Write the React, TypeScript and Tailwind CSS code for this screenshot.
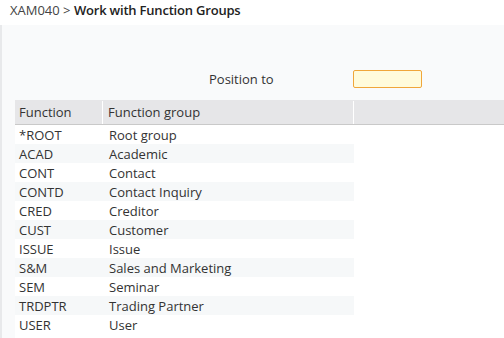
// Work with Function Groups
// Title bar, a "Position to" filter line and the list of function groups
// in a striped three-column table.

const ROWS: [string, string][] = [
  ["*ROOT", "Root group"],
  ["ACAD", "Academic"],
  ["CONT", "Contact"],
  ["CONTD", "Contact Inquiry"],
  ["CRED", "Creditor"],
  ["CUST", "Customer"],
  ["ISSUE", "Issue"],
  ["S&M", "Sales and Marketing"],
  ["SEM", "Seminar"],
  ["TRDPTR", "Trading Partner"],
  ["USER", "User"],
];

export default function App() {
  return (
    <div className="flex h-[338px] w-[504px] flex-col overflow-hidden bg-white font-['Open_Sans',sans-serif] text-[#333]">
      <div className="h-[25px] px-[10px] text-[13px] leading-[20px]">
        <span className="text-[#444]">XAM040 &gt; </span>
        <span className="font-semibold tracking-[-0.2px] text-[#222]">Work with Function Groups</span>
      </div>

      <div className="flex flex-1 flex-col border-l-2 border-[#e8e9eb] bg-[#f9fafb] pl-[13px]">
        {/* Position to */}
        <div className="flex h-[75px] items-start pt-[45px]">
          <span className="ml-[194px] w-[144px] text-[13px] leading-[18px]">Position to</span>
          <input
            aria-label="Position to"
            className="h-[18px] w-[69px] rounded-[2px] border border-[#f0a63a] bg-[#fffbdb] outline-none"
          />
        </div>

        {/* List */}
        <div className="flex-1 bg-white text-[13px]">
          <div className="flex h-[25px] border-b border-[#c9c9c9] bg-[#e6e6e8] pt-[1px] leading-[23px]">
            <div className="w-[88px] border-r border-white pl-[4px]">Function</div>
            <div className="w-[251px] border-r border-white pl-[5px]">Function group</div>
            <div className="flex-1" />
          </div>
          {ROWS.map(([code, name], i) => (
            <div key={code} className="flex h-[19px]">
              <div className={`flex w-[339px] pt-[1px] leading-[18px] ${i % 2 === 1 ? "bg-[#f6f8f9]" : "bg-white"}`}>
                <div className="w-[89px] pl-[4px]">{code}</div>
                <div className="flex-1 pl-[5px]">{name}</div>
              </div>
              <div className="flex-1" />
            </div>
          ))}
        </div>
      </div>
    </div>
  );
}
